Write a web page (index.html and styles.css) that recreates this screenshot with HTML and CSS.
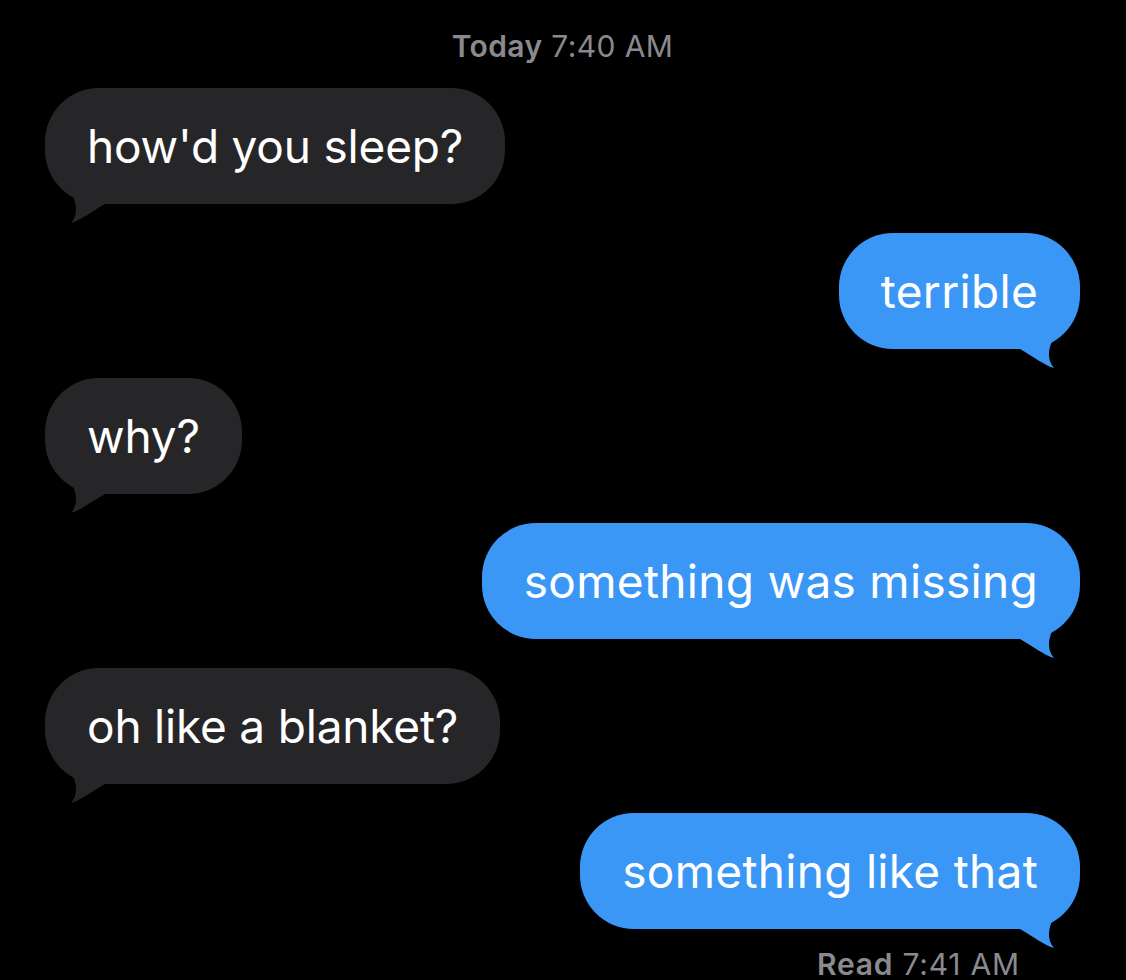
FILE: index.html
```html
<html lang="en">
<head>
    <meta charset="UTF-8">
    <title>Messages</title>
    <link rel="stylesheet" href="styles.css">
</head>
<body>
	<div id="thread" class="thread">
		<p class="stamp"><b>Today</b> 7:40 AM</p>

		<div class="row in">
			<div class="bubble">how'd you sleep?<svg class="tail" viewBox="0 0 70 52"><path d="M18 0 L27 20 C31 28 34 40 26 49 C36 46 46 38 60 30 L60 0 Z"/></svg></div>
		</div>

		<div class="row out">
			<div class="bubble">terrible<svg class="tail" viewBox="0 0 70 52"><path d="M18 0 L27 20 C31 28 34 40 26 49 C36 46 46 38 60 30 L60 0 Z"/></svg></div>
		</div>

		<div class="row in">
			<div class="bubble">why?<svg class="tail" viewBox="0 0 70 52"><path d="M18 0 L27 20 C31 28 34 40 26 49 C36 46 46 38 60 30 L60 0 Z"/></svg></div>
		</div>

		<div class="row out">
			<div class="bubble">something was missing<svg class="tail" viewBox="0 0 70 52"><path d="M18 0 L27 20 C31 28 34 40 26 49 C36 46 46 38 60 30 L60 0 Z"/></svg></div>
		</div>

		<div class="row in">
			<div class="bubble">oh like a blanket?<svg class="tail" viewBox="0 0 70 52"><path d="M18 0 L27 20 C31 28 34 40 26 49 C36 46 46 38 60 30 L60 0 Z"/></svg></div>
		</div>

		<div class="row out">
			<div class="bubble">something like that<svg class="tail" viewBox="0 0 70 52"><path d="M18 0 L27 20 C31 28 34 40 26 49 C36 46 46 38 60 30 L60 0 Z"/></svg></div>
		</div>

		<p class="receipt"><b>Read</b> 7:41 AM</p>
	</div>
</body>
</html>
```

FILE: styles.css
```css
        body {
            margin: 0;
            padding: 0;
            background-color: black;
            font-family: Inter, "Noto Sans", sans-serif;
        }

		.thread {
		  display: flex;
		  flex-direction: column;
		  gap: 29px;
		  padding: 29px 46px 0 45px;
		}

		.stamp {
		  margin: 0 0 -4px 0;
		  text-align: center;
		  color: #8a8a8e;
		  font-size: 30px;
		  line-height: 34px;
		  letter-spacing: 0.4px;
		}

		.stamp b,
		.receipt b {
		  font-weight: 600;
		}

		.row {
		  display: flex;
		}

		.row.out {
		  justify-content: flex-end;
		}

		.bubble {
		  position: relative;
		  padding: 30px 42px;
		  font-size: 46px;
		  line-height: 56px;
		  color: white;
		  border-radius: 54px;
		  white-space: nowrap;
		}

		.in .bubble {
		  background-color: #262628;
		  letter-spacing: -0.2px;
		}

		.out .bubble {
		  background-color: #3b97f5;
		  letter-spacing: 0.3px;
		}

		.tail {
		  position: absolute;
		  bottom: -22px;
		  width: 70px;
		  height: 52px;
		}

		.in .tail {
		  left: 0;
		  fill: #262628;
		}

		.out .tail {
		  right: 0;
		  fill: #3b97f5;
		  transform: scaleX(-1);
		}

		.receipt {
		  margin: -11px 60px 0 0;
		  text-align: right;
		  color: #8a8a8e;
		  font-size: 30px;
		  line-height: 34px;
		  letter-spacing: 0.8px;
		}
```
